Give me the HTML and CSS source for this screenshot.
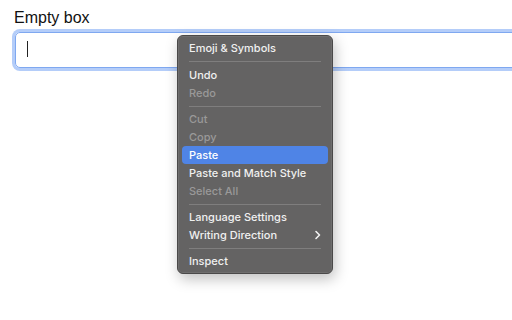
FILE: index.html
```html
<!DOCTYPE html>
<html>
<head>
    <title>Empty box</title>
    <link rel="stylesheet" href="styles.css">
</head>
<body>

    <div class="page">
        <label class="field-label">Empty box</label>
        <div class="text-box"><span class="caret"></span></div>
    </div>

    <div class="menu">
        <div class="item">Emoji &amp; Symbols</div>
        <div class="sep first"></div>
        <div class="item">Undo</div>
        <div class="item disabled">Redo</div>
        <div class="sep"></div>
        <div class="item disabled">Cut</div>
        <div class="item disabled">Copy</div>
        <div class="item active">Paste</div>
        <div class="item">Paste and Match Style</div>
        <div class="item disabled">Select All</div>
        <div class="sep"></div>
        <div class="item">Language Settings</div>
        <div class="item">Writing Direction
            <svg class="chevron" width="8" height="10" viewBox="0 0 8 10">
                <polyline points="2,1.5 5.5,5 2,8.5" fill="none" stroke="#f2f2f2" stroke-width="1.6" stroke-linecap="round" stroke-linejoin="round"/>
            </svg>
        </div>
        <div class="sep"></div>
        <div class="item">Inspect</div>
    </div>

</body>
</html>
```

FILE: styles.css
```css
html, body {
    margin: 0;
    overflow: hidden;
    background: #fff;
}
body {
    width: 512px;
    height: 320px;
    position: relative;
}
.page {
    padding: 8px 0 6px 14px;
    overflow: hidden;
    font-family: "Liberation Sans", Arial, sans-serif;
}
.field-label {
    display: block;
    font-size: 16px;
    line-height: 19px;
    color: #111;
}
.text-box {
    box-sizing: border-box;
    margin: 5px -40px 0 1px;
    height: 36px;
    border: 1px solid #7fa8f0;
    border-radius: 5px;
    box-shadow: 0 0 0 3px #b4cdf9;
    padding: 8px 0 0 11px;
}
.caret {
    display: inline-block;
    width: 1px;
    height: 16px;
    background: #222;
}

/* context menu */
.menu {
    position: absolute;
    left: 177px;
    top: 35px;
    width: 156px;
    box-sizing: border-box;
    padding: 3px 4px 3px 4px;
    background: #646363;
    border: 1px solid #4a4949;
    border-radius: 6px;
    box-shadow: 0 0 0 0.5px rgba(255,255,255,0.15) inset, 2px 5px 14px rgba(0,0,0,0.25);
    font-family: Inter, "Noto Sans", sans-serif;
    font-size: 11px;
    font-weight: 500;
    color: #f0f0f0;
}
.item {
    position: relative;
    height: 18px;
    line-height: 18px;
    padding-left: 7px;
    border-radius: 4px;
    white-space: nowrap;
}
.item.disabled {
    color: #9a9999;
}
.item.active {
    background: #4f84e6;
    color: #fff;
}
.chevron {
    position: absolute;
    right: 6px;
    top: 4px;
}
.sep {
    height: 1px;
    margin: 4px 7px 3px 7px;
    background: #7f7e7e;
}
.sep.first {
    margin-bottom: 4px;
}
```
